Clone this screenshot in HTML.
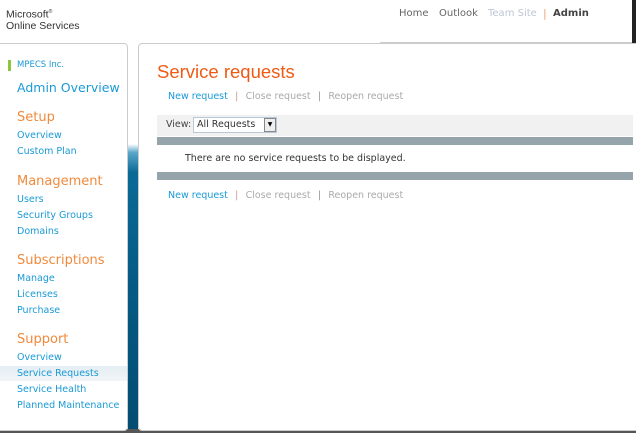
<!DOCTYPE html>
<html><head><style>
body{margin:0;width:636px;height:433px;background:#fff;font-family:"DejaVu Sans","Liberation Sans",sans-serif;position:relative;overflow:hidden}
.a{position:absolute;white-space:nowrap}
.l{color:#1a9ad6;font-size:9.5px}
.h{color:#f08a3c;font-size:13px}
.g{color:#aaa;font-size:9.5px}
.b{color:#1a9ad6;font-size:9.5px}
.s{color:#c99;font-size:10px;margin:0 4px}
.lk{line-height:12px;font-size:9.5px}
</style></head><body>
<div class="a" style="left:6px;top:7px;font-size:10.5px;line-height:11px;color:#333;font-family:'Liberation Sans',sans-serif">Microsoft<sup style="font-size:5px">®</sup><br>Online Services</div>
<div class="a" style="left:399px;top:8px;font-size:10px;color:#666">Home</div>
<div class="a" style="left:439px;top:8px;font-size:10px;color:#666">Outlook</div>
<div class="a" style="left:488px;top:8px;font-size:10px;color:#bcc8d4">Team Site</div>
<div class="a" style="left:543px;top:7px;font-size:11px;color:#f0a070">|</div>
<div class="a" style="left:553px;top:8px;font-size:10px;color:#444;font-weight:bold">Admin</div>
<div class="a" style="left:380px;top:42px;width:252px;height:1px;background:#ccc"></div>
<div class="a" style="left:632px;top:0;width:4px;height:433px;background:#222"></div>
<div class="a" style="left:0;top:429px;width:636px;height:4px;background:#555"></div>
<div class="a" style="left:128px;top:144px;width:10px;height:285px;background:linear-gradient(#fff,#5aa6c8 3%,#0a6a96 10%,#055a84 50%,#044d72)"></div>
<div class="a" style="left:-4px;top:43px;width:130px;height:386px;border:1px solid #ccc;border-radius:4px;background:#fff"></div>
<div class="a" style="left:138px;top:43px;width:500px;height:386px;border:1px solid #ccc;border-radius:4px;background:#fff"></div>
<div class="a" style="left:8px;top:60px;width:3px;height:11px;background:#8cc63f"></div>
<div class="a" style="left:17px;top:60px;font-size:8.5px;color:#1a9ad6">MPECS Inc.</div>
<div class="a" style="left:17px;top:80px;font-size:12.5px;color:#1a9ad6">Admin Overview</div>
<div class="a h" style="left:17px;top:110px">Setup</div>
<div class="a l" style="left:17px;top:130px">Overview</div>
<div class="a l" style="left:17px;top:146px">Custom Plan</div>
<div class="a h" style="left:17px;top:174px">Management</div>
<div class="a l" style="left:17px;top:194px">Users</div>
<div class="a l" style="left:17px;top:210px">Security Groups</div>
<div class="a l" style="left:17px;top:226px">Domains</div>
<div class="a h" style="left:17px;top:253px">Subscriptions</div>
<div class="a l" style="left:17px;top:273px">Manage</div>
<div class="a l" style="left:17px;top:289px">Licenses</div>
<div class="a l" style="left:17px;top:305px">Purchase</div>
<div class="a h" style="left:17px;top:332px">Support</div>
<div class="a l" style="left:17px;top:352px">Overview</div>
<div class="a" style="left:0;top:366px;width:127px;height:15px;background:linear-gradient(#e4eef4,#f2f5f7)"></div>
<div class="a l" style="left:17px;top:368px">Service Requests</div>
<div class="a l" style="left:17px;top:384px">Service Health</div>
<div class="a l" style="left:17px;top:400px">Planned Maintenance</div>
<div class="a" style="left:157px;top:61px;font-size:18.5px;color:#f05a14;font-family:'Liberation Sans',sans-serif">Service requests</div>
<div class="a lk" style="left:168px;top:91px"><span class="b">New request</span><span class="s">&nbsp;|&nbsp;</span><span class="g">Close request</span><span class="s" style="color:#999">&nbsp;|&nbsp;</span><span class="g">Reopen request</span></div>
<div class="a" style="left:157px;top:115px;width:476px;height:21px;background:#f1f1f1"></div>
<div class="a" style="left:166px;top:119px;font-size:9.5px;color:#444">View:</div>
<div class="a" style="left:193px;top:117px;width:82px;height:14px;border:1px solid #b8c8d8;background:#fff;font-size:9.5px;color:#333;line-height:14px;text-indent:3px">All Requests</div>
<div class="a" style="left:264px;top:118px;width:10px;height:12px;border:1px solid #888;background:#eee;font-size:6px;text-align:center;line-height:12px">▼</div>
<div class="a" style="left:157px;top:137px;width:476px;height:8px;background:#95a3ab"></div>
<div class="a" style="left:185px;top:153px;font-size:9.5px;color:#333">There are no service requests to be displayed.</div>
<div class="a" style="left:157px;top:172px;width:476px;height:8px;background:#95a3ab"></div>
<div class="a lk" style="left:168px;top:190px"><span class="b">New request</span><span class="s">&nbsp;|&nbsp;</span><span class="g">Close request</span><span class="s" style="color:#999">&nbsp;|&nbsp;</span><span class="g">Reopen request</span></div>
</body></html>
